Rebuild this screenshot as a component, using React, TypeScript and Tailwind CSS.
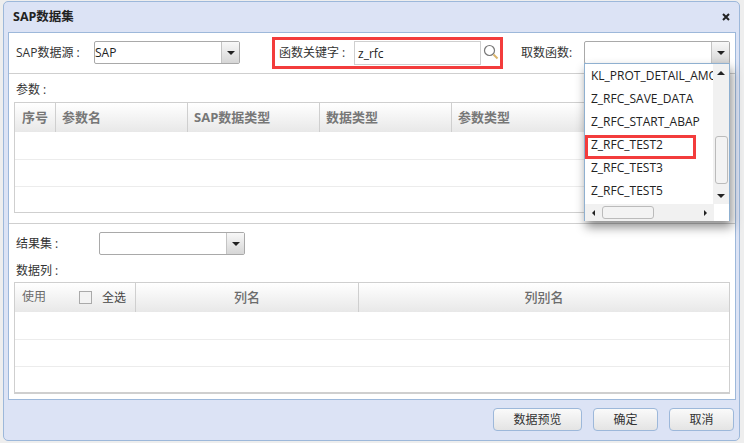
import React from 'react';

const paramCols = [
  { label: '序号', w: 'w-[41px]' },
  { label: '参数名', w: 'w-[132px]' },
  { label: 'SAP数据类型', w: 'w-[132px]' },
  { label: '数据类型', w: 'w-[132px]' },
  { label: '参数类型', w: 'flex-1' },
];

const funcs = ['KL_PROT_DETAIL_AMOUNT', 'Z_RFC_SAVE_DATA', 'Z_RFC_START_ABAP', 'Z_RFC_TEST2', 'Z_RFC_TEST3', 'Z_RFC_TEST5'];

const Arrow = ({ dir }: { dir: 'up' | 'down' | 'left' | 'right' }) => {
  if (dir === 'up') return <div className="w-0 h-0 border-x-[4px] border-x-transparent border-b-[4px] border-b-[#222]" />;
  if (dir === 'down') return <div className="w-0 h-0 border-x-[4px] border-x-transparent border-t-[4px] border-t-[#222]" />;
  if (dir === 'left') return <div className="w-0 h-0 border-y-[3px] border-y-transparent border-r-[3px] border-r-[#222]" />;
  return <div className="w-0 h-0 border-y-[3px] border-y-transparent border-l-[3px] border-l-[#222]" />;
};

const Combo = ({ value }: { value?: string }) => (
  <div className="flex h-[23px] w-[146px] border border-[#a9a9a9] rounded-[2px] bg-white">
    <div className="flex-1 leading-[21px] text-[#222]">{value}</div>
    <div className="w-[18px] flex items-center justify-center border-l border-[#c4c4c4] bg-gradient-to-b from-[#f8f8f8] to-[#d6d6d6]">
      <Arrow dir="down" />
    </div>
  </div>
);

const Rows = () => (
  <>
    <div className="h-[28px] border-b border-[#ececec]" />
    <div className="h-[27px] border-b border-[#ececec]" />
  </>
);

const HeaderCell = ({ className, children }: { className: string; children: React.ReactNode }) => (
  <div className={`h-full border-r border-[#cfcfcf] flex items-center text-[13px] text-[#6c6c6c] ${className}`}>{children}</div>
);

export default function App() {
  return (
    <div className="w-[744px] h-[443px] bg-[#eeeeee] overflow-hidden pt-[1px] pl-[3px] text-[12px] text-[#333]" style={{ fontFamily: '"Open Sans", "Noto Sans CJK SC", sans-serif' }}>
      <div className="relative w-[737px] h-[440px] border border-[#9db8da] rounded-[5px] bg-[#dce3f5] px-[4px] flex flex-col">
        {/* title */}
        <div className="h-[30px] shrink-0 flex items-center justify-between pl-[5px] pr-[3px]">
          <span className="font-bold text-[12.5px] text-[#222]">SAP数据集</span>
          <svg width="10" height="10" viewBox="0 0 10 10" className="mr-[1px]">
            <path d="M2 2l6 6M8 2l-6 6" stroke="#222" strokeWidth="2" />
          </svg>
        </div>

        <div className="w-[728px] h-[368px] bg-white border border-[#9db8da] flex flex-col">
          {/* top row */}
          <div className="h-[41px] shrink-0 border-b border-[#cfcfcf] flex items-start pt-[8px] pl-[7px]">
            <span className="w-[78px] leading-[23px]">SAP数据源 :</span>
            <Combo value="SAP" />
            <span className="ml-[39px] w-[75px] leading-[23px]">函数关键字 :</span>
            <div className="w-[127px] h-[24px] border border-[#cfcfcf] leading-[24px] pl-[3px] text-[#222]">z_rfc</div>
            <svg width="16" height="17" viewBox="0 0 16 17" className="ml-[2px] mt-[3px]">
              <circle cx="6.5" cy="6.5" r="5" fill="none" stroke="#777" strokeWidth="1.2" />
              <path d="M10.5 10.5l4 4" stroke="#d9b36a" strokeWidth="2" />
            </svg>
            <span className="ml-[22px] w-[63px] leading-[23px]">取数函数:</span>
            <Combo />
          </div>

          {/* params */}
          <div className="h-[150px] shrink-0 border-b border-[#cfcfcf] px-[5px] flex flex-col">
            <div className="h-[28px] shrink-0 pl-[2px] leading-[31px]">参数 :</div>
            <div className="h-[111px] border border-[#cfcfcf]">
              <div className="h-[29px] flex bg-gradient-to-b from-white to-[#e8e8e8]">
                {paramCols.map((col) => (
                  <HeaderCell key={col.label} className={`${col.w} ${col.label === '序号' ? 'justify-center' : 'pl-[6px]'}`}>
                    <span className="font-bold text-[#777]">{col.label}</span>
                  </HeaderCell>
                ))}
              </div>
              <Rows />
            </div>
          </div>

          {/* results */}
          <div className="flex-1 px-[5px] flex flex-col">
            <div className="h-[31px] shrink-0 pt-[8px] flex items-start">
              <span className="w-[85px] pl-[2px] leading-[23px]">结果集 :</span>
              <Combo />
            </div>
            <div className="h-[27px] shrink-0 pl-[2px] pt-[6px] leading-[20px]">数据列 :</div>
            <div className="h-[112px] border border-[#cfcfcf] border-b-2">
              <div className="h-[29px] flex bg-gradient-to-b from-white to-[#e8e8e8]">
                <HeaderCell className="w-[121px] pl-[7px]">
                  <span className="text-[12px] -mt-[2px] w-[57px]">使用</span>
                  <span className="w-[13px] h-[13px] border border-[#aaa] bg-[#f3f3f3]" />
                  <span className="ml-[10px] text-[12px] text-[#444]">全选</span>
                </HeaderCell>
                <HeaderCell className="w-[223px] justify-center font-medium">列名</HeaderCell>
                <div className="flex-1 flex items-center justify-center text-[13px] font-medium text-[#6c6c6c]">列别名</div>
              </div>
              <Rows />
            </div>
          </div>
        </div>

        {/* footer */}
        <div className="flex-1 flex justify-end items-start pt-[8px] pr-[1px] gap-[11px]">
          {['数据预览', '确定', '取消'].map((b) => (
            <button key={b} className={`h-[23px] ${b === '数据预览' ? 'w-[89px]' : 'w-[65px]'} border border-[#9db8da] rounded-[4px] bg-gradient-to-b from-[#fafafa] to-[#e4e4e4] text-[12px] text-[#333]`}>
              {b}
            </button>
          ))}
        </div>

        {/* red highlight around keyword search */}
        <div className="absolute left-[268px] top-[35px] w-[231px] h-[32px] border-[3px] border-[#f33c3c]" />

        {/* open dropdown */}
        <div className="absolute left-[580px] top-[61px] w-[146px] h-[158px] bg-white border border-[#8fb0d0] border-b-0 shadow-[2px_6px_10px_rgba(0,0,0,0.45)] flex flex-col">
          <div className="flex h-[140px]">
            <div className="flex-1 overflow-hidden pl-[6px] text-[#222]">
              {funcs.map((f) => (
                <div key={f} className="h-[23px] leading-[23px] whitespace-nowrap">{f}</div>
              ))}
            </div>
            <div className="w-[16px] bg-[#f1f1f1] flex flex-col items-center">
              <div className="h-[17px] flex items-center"><Arrow dir="up" /></div>
              <div className="flex-1 w-full">
                <div className="mt-[55px] mx-auto w-[13px] h-[48px] bg-[#f3f3f3] border border-[#bbb] rounded-[3px]" />
              </div>
              <div className="h-[17px] flex items-center"><Arrow dir="down" /></div>
            </div>
          </div>
          <div className="flex flex-1 bg-[#f1f1f1] items-center">
            <div className="w-[129px] h-full flex items-center">
              <div className="w-[17px] flex justify-center"><Arrow dir="left" /></div>
              <div className="w-[52px] h-[13px] bg-[#f3f3f3] border border-[#bbb] rounded-[3px]" />
              <div className="ml-auto w-[17px] flex justify-center"><Arrow dir="right" /></div>
            </div>
            <div className="flex-1 h-full bg-white" />
          </div>
          {/* red highlight on the chosen item */}
          <div className="absolute left-0 top-[71px] w-[111px] h-[24px] border-[3px] border-[#f33c3c]" />
        </div>
      </div>
    </div>
  );
}
